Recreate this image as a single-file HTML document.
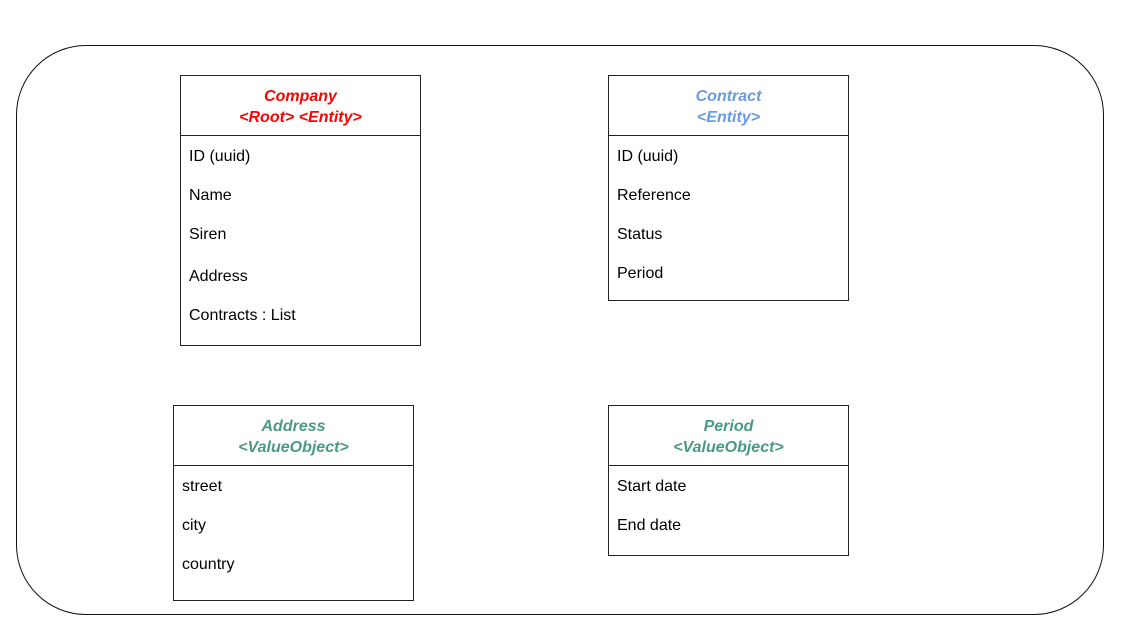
<!DOCTYPE html>
<html><head><meta charset="utf-8"><style>
html,body{margin:0;padding:0;background:#fff;width:1124px;height:642px;overflow:hidden;font-family:"Liberation Sans",Arial,sans-serif;}
.outer{position:absolute;left:16px;top:45px;width:1086px;height:568px;border:1.5px solid #111;border-radius:70px;box-sizing:content-box;}
.box{position:absolute;border:1px solid #222;box-sizing:border-box;background:#fff;}
.hd{position:absolute;left:0;right:0;top:0;height:60px;border-bottom:1px solid #222;text-align:center;font-weight:bold;font-style:italic;font-size:16px;line-height:21px;padding-top:10px;box-sizing:border-box;}
.it{position:absolute;left:8px;font-size:16px;line-height:20px;color:#000;}
</style></head><body>
<div class="outer"></div>

<div class="box" style="left:180px;top:75px;width:241px;height:271px;">
<div class="hd" style="color:#ff0000">Company<br>&lt;Root&gt; &lt;Entity&gt;</div>
<div class="it" style="top:71px">ID (uuid)</div>
<div class="it" style="top:110px">Name</div>
<div class="it" style="top:149px">Siren</div>
<div class="it" style="top:191px">Address</div>
<div class="it" style="top:230px">Contracts : List</div>
</div>

<div class="box" style="left:608px;top:75px;width:241px;height:226px;">
<div class="hd" style="color:#6a9be0">Contract<br>&lt;Entity&gt;</div>
<div class="it" style="top:71px">ID (uuid)</div>
<div class="it" style="top:110px">Reference</div>
<div class="it" style="top:149px">Status</div>
<div class="it" style="top:188px">Period</div>
</div>

<div class="box" style="left:173px;top:405px;width:241px;height:196px;">
<div class="hd" style="color:#4a9985">Address<br>&lt;ValueObject&gt;</div>
<div class="it" style="top:71px">street</div>
<div class="it" style="top:110px">city</div>
<div class="it" style="top:149px">country</div>
</div>

<div class="box" style="left:608px;top:405px;width:241px;height:151px;">
<div class="hd" style="color:#4a9985">Period<br>&lt;ValueObject&gt;</div>
<div class="it" style="top:71px">Start date</div>
<div class="it" style="top:110px">End date</div>
</div>
</body></html>
